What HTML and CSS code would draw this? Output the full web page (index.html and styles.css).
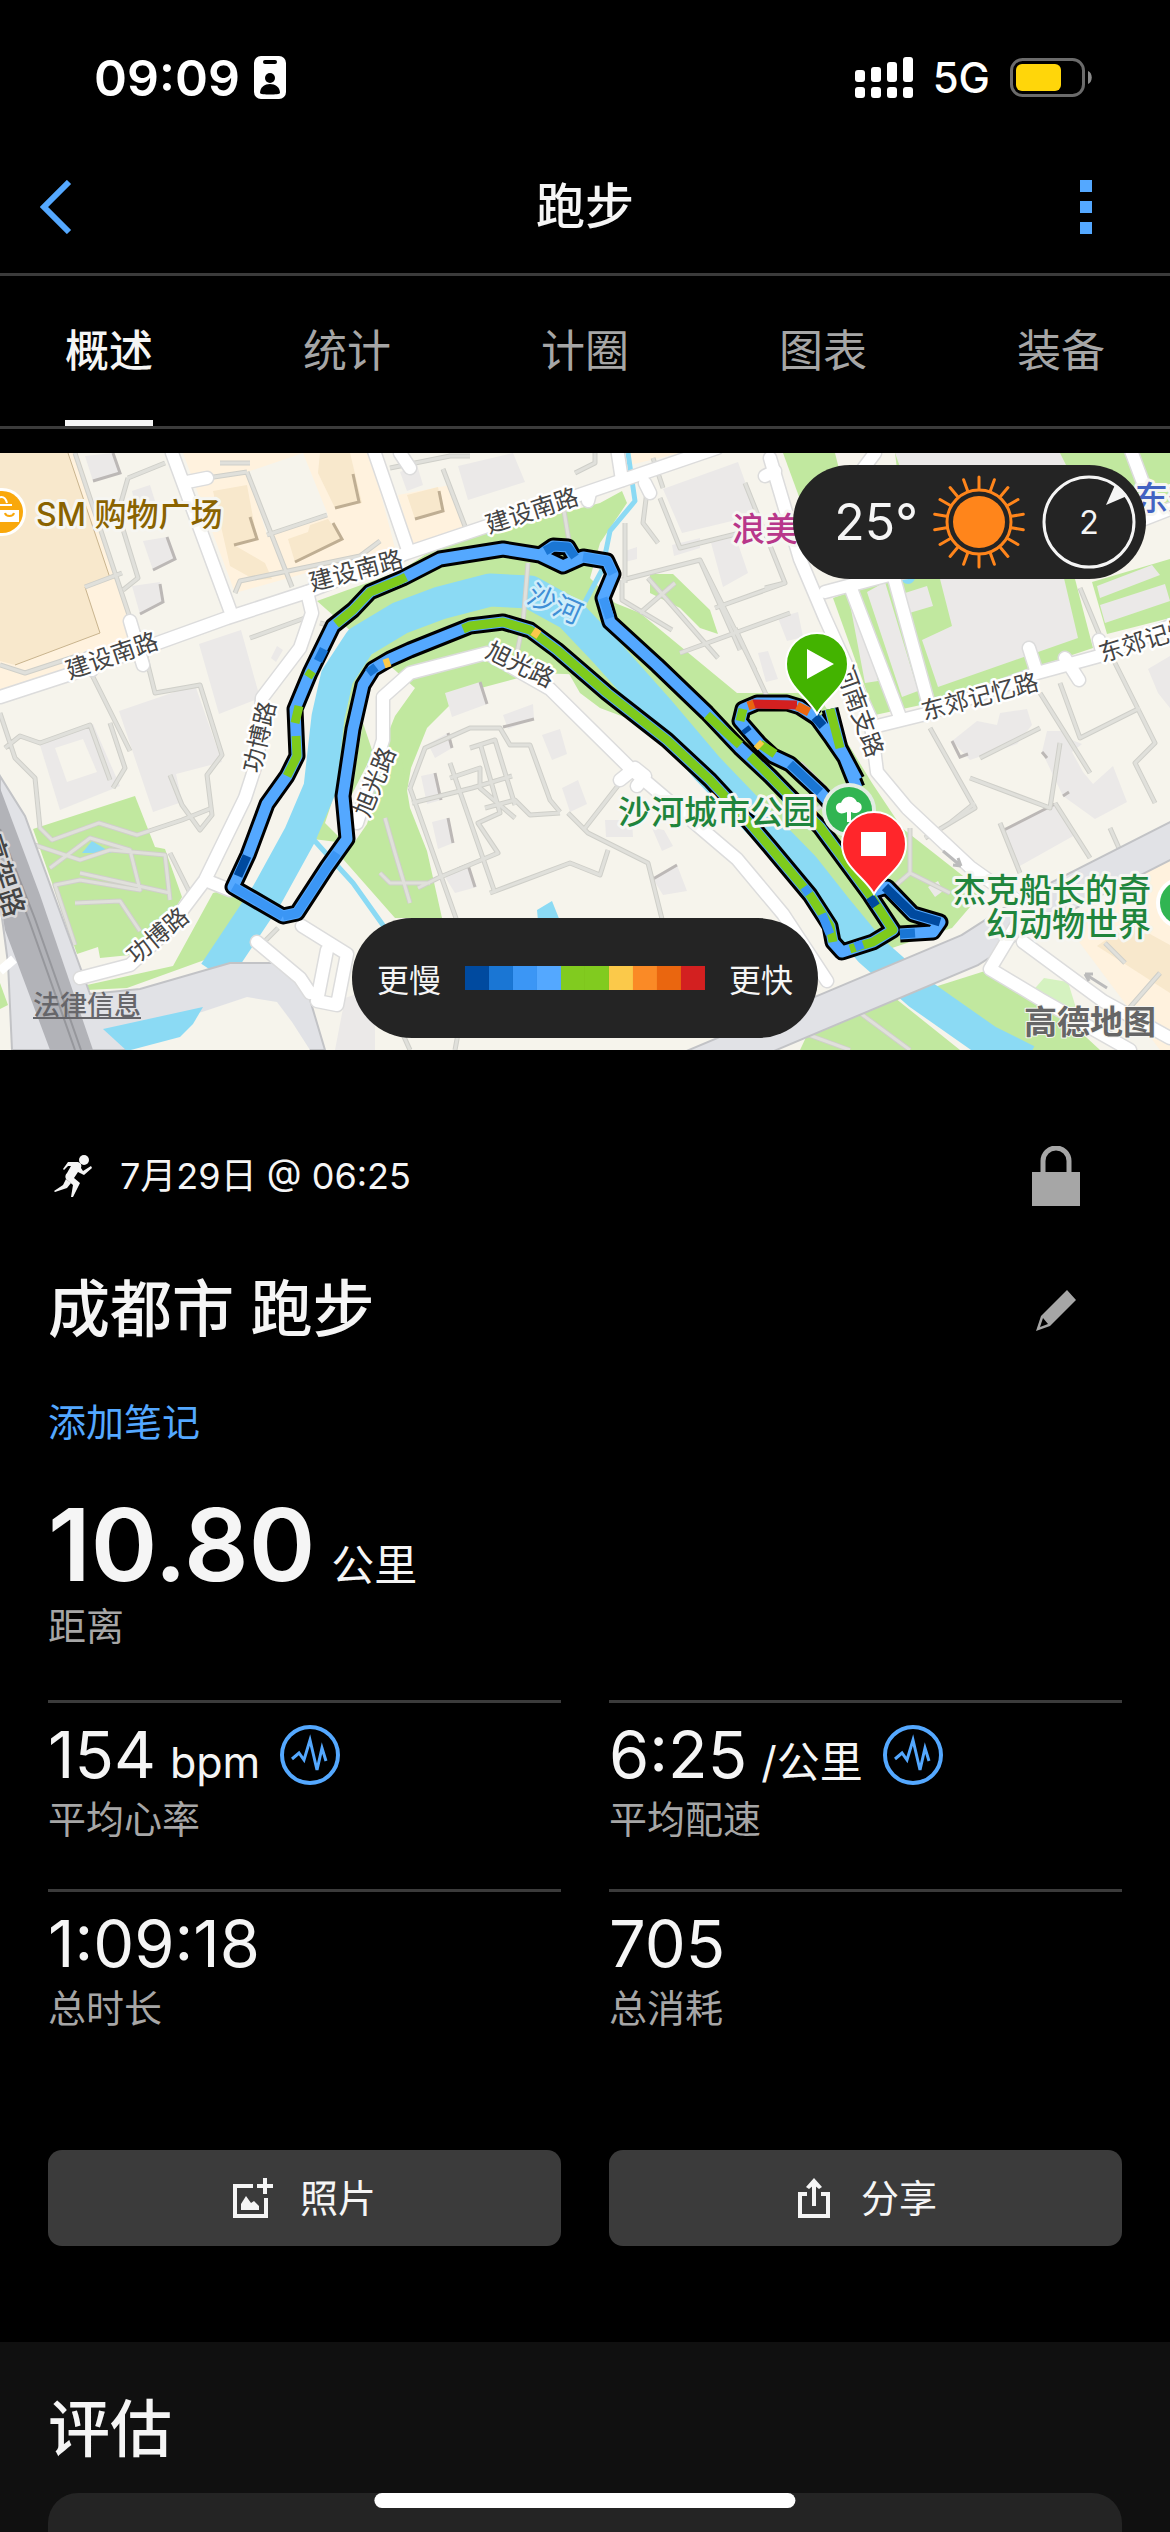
FILE: index.html
```html
<!DOCTYPE html>
<html lang="zh-CN">
<head>
    <meta charset="UTF-8">
    <meta name="viewport" content="width=device-width, initial-scale=1.0">
    <title>跑步</title>
    <link rel="stylesheet" href="styles.css">
</head>
<body>

<div class="status-bar">
    <div class="status-left">
        <span class="time">09:09</span>
        <svg width="32" height="43" viewBox="0 0 32 43">
            <rect width="32" height="43" rx="7" fill="#fff"/>
            <rect x="9" y="4" width="14" height="4" rx="2" fill="#000"/>
            <circle cx="16" cy="22" r="5" fill="#000"/>
            <path d="M6 37c0-12 20-12 20 0 0 2-20 2-20 0z" fill="#000"/>
        </svg>
    </div>
    <div class="status-right">
        <svg width="58" height="42" viewBox="0 0 58 42" fill="#fff">
            <rect x="0" y="13" width="10" height="12" rx="3"/>
            <rect x="16" y="10" width="10" height="15" rx="3"/>
            <rect x="32" y="5" width="10" height="20" rx="3"/>
            <rect x="48" y="0" width="10" height="25" rx="3"/>
            <rect x="0" y="30" width="10" height="11" rx="3"/>
            <rect x="16" y="30" width="10" height="11" rx="3"/>
            <rect x="32" y="30" width="10" height="11" rx="3"/>
            <rect x="48" y="30" width="10" height="11" rx="3"/>
        </svg>
        <span class="network">5G</span>
        <svg width="82" height="39" viewBox="0 0 82 39">
            <rect x="1.5" y="1.5" width="72" height="36" rx="11" fill="none" stroke="#6b6b6b" stroke-width="3"/>
            <rect x="6" y="6" width="45" height="27" rx="6" fill="#ffd60a"/>
            <path d="M78 13c5 2 5 11 0 13z" fill="#8a8a8a"/>
        </svg>
    </div>
</div>

<header class="header">
    <button class="icon-button back" aria-label="返回">
        <svg width="32" height="54" viewBox="0 0 32 54"><path d="M29 2L4 27l25 25" fill="none" stroke="#54a8ff" stroke-width="6"/></svg>
    </button>
    <h1>跑步</h1>
    <button class="icon-button" aria-label="更多">
        <svg width="12" height="54" viewBox="0 0 12 54" fill="#54a8ff"><path d="M0 0h12v12H0zM0 21h12v12H0zM0 42h12v12H0z"/></svg>
    </button>
</header>

<nav class="tabs">
    <a class="tab active" href="#overview">概述</a>
    <a class="tab" href="#stats">统计</a>
    <a class="tab" href="#laps">计圈</a>
    <a class="tab" href="#charts">图表</a>
    <a class="tab" href="#gear">装备</a>
</nav>

<div class="map">
    <svg class="map-canvas" viewBox="0 0 1170 597">
        <defs>
            <g id="streets">
                <path d="M0 244l80-26 147-53 80-26 100-39 143-48 73-25 94-32"/>
                <path d="M172 0l58 157M187 29l20-4M373-5l34 99M410 15l-10-15M130 168l13 44M88 205l4 12M617-5l5 32M645 30l5 10M588 48l2-8"/>
                <path d="M307 139l5 21-12 35-38 50-4 60-13 40-40 82-40 53-35 32-50 13M205 427l25 10"/>
                <path d="M383 287v-43l27-24 77-20 63 36 80 79 107 91 46 55 44 67M383 287l-26 83M620 327l15-12 10 8-8 10"/>
                <path d="M770 5l30 101 25 59 45 99 7 55 30 36 63 59 45 32 8 15-33 55 50 30 90 51M1023 489l80 59 67 37"/>
                <path d="M873 274l57-14 107-40 66-18 67-29M1037 220l-8-25M1103 202l-4-15M1065 205l14 22"/>
                <path d="M825 139l68-18 200-35 77-30M850 133l50 131M893 121l37 135M1130-5l15 40M860 20l15-20M775 18l-10 5"/>
                <path d="M257 489l43 36 10 15M302 473l45 28-10 51-20-4 10-51"/>
            </g>
            <g id="footpaths">
                <path d="M75 0l55 165M128 25l37-15M128 25l-10 35 20 65-15 12M85 134l37-14M0 212l25 8 55-18M90 218l40 80M145 200l10 40 45-8 22 70-15 20 5 40-12 15-18-25-12-30M140 190l-3 20M247 19l45 115M207 25l40-6M267 82l60-20M235 140l5-12 120-25 20-15"/>
                <path d="M5 295l15-12 20 7 50-18 20 55M0 260l15 45 20 20 5 50 12 12 47-17 38 12 45-15 30-12M35 392l45 15 30-10 55 5 5 45M50 415l40-30 40 12 10 40-60-10-25 5 20 60M80 420l90 20M75 450l45-2 20 30M110 270l15 45-12 20"/>
                <path d="M250 185l55-20M220 10h30M320 170l20 5M443 16l25 65M390 15l60-12 20 0M575 20l20-10 0-25M563 52l8 48M528 110l-5 60-6 30M648 30l-5 40 15 20M660 45l20 50 60-15M653 5l10 30"/>
                <path d="M622 127l78-20 55 110M700 107l40 90M622 127v20l50 30M648 125l70 80M640 160l35-30M715 155l70-25M680 200l110-40M735 175l35 75M745 30l40 100-20 5M625 70v60"/>
                <path d="M410 335l15-40 45-20 30 0 10 17 20 0 20 55 10 12M470 295l25-8 20 65M480 290l20 70-22 10 20 30-60 25-20 10M410 335l60 170M450 310l45 130M450 325l30-10 0 20 35 30M412 350l60-15 40-12M430 430l-40 0-10-10M560 360l-30 2-15-15-30 8M568 360l20 20 60 30 15 60M585 375l35-45M490 440l80-30 30 12 8-25"/>
                <path d="M385 365l10 35 15 50M170 400l20 40M278 475l-20 20M930 275l45 80-50 30M975 350l-25 20M1000 370l20 50M1040 240l50 80M1060 230l20 55 60-30M1080 135l25 60M1110 200l45 90-20 20 20 40M1060 290l-10 65-80-30M980 305l60-30M1055 350l35 55M1110 375l20 45M910 375l0 45-35 30M910 420l40 20M860 330l-50 30M800 310l40 40"/>
                <path d="M230 597l10-40M400 575l10 22M460 570l-5 27M860 540l0 20 50 37M1105 490l20 20M1160 520l-35 40M790 575l60 22"/>
            </g>
            <g id="track-line">
                <path d="M233 434l15-32 19-51 20-28 10-20-2-47 15-36 23-47 20-16 17-18 33-14 37-19 63-10 37 6 23 11 20-9 24 4 6 13-10 24 7 24 47 43 50 48 33 35 30 28 50 51 50 68 23 35-20 12-31 10-9-10-3-16-20-31-40-48-23-27-37-40-43-40-60-47-50-43-27-20-27-8-33 4-30 12-30 12-20 9-17 10-10 16-10 44-10 67 4 43-20 28-30 46-14 3z"/>
                <path d="M540 102l13-9 15 1 7 12"/>
                <path d="M817 265l-17-11-13-4h-30l-14 6-3 12 20 23 13 12 17 8 30 28 40 45M874 438l13-4 26 27 27 8-7 10-33 2"/>
                <path d="M817 265l13 18 15 22 12 30M830 256l10 39 17 32"/>
            </g>
        </defs>

        <rect width="1170" height="597" fill="#f6f4ec"/>

        <!-- shopping and residential blocks -->
        <g fill="#fff2de">
            <path d="M0 0h78l50 160 12 30L0 240z"/>
            <path d="M183 0h187l25 95-160 45z"/>
            <path d="M398 42l52-10 15 42-52 20z"/>
            <path d="M628 0h52l-50 12z"/>
            <path d="M1065 470l105-65v192h-10z"/>
        </g>
        <path d="M247 19l56-19 25 62-61 20z" fill="#f6f4ec"/>
        <g fill="#f8e8cc">
            <path d="M0 0h68l42 125-25 9 15 46-85 32-15-4z"/>
            <path d="M213 38l34-6 10 54-23 6 31 18 7 16-17 1-25-14z"/>
            <path d="M320 0h30l12 50-27 5-17-35z"/>
            <path d="M288 86l20-7 2-7 18-6 14 20-47 23z"/>
            <path d="M407 42l31-8 5 24-28 8z"/>
            <path d="M1097 493l33-23 40 22v48z"/>
        </g>
        <path d="M234 92l23-6-7-22M295 109l47-23-9-16M335 55l24-6-6-28M415 66l28-8-4-20" fill="none" stroke="#bfae93" stroke-width="3"/>
        <path d="M68 0l42 125-25 9 15 46-85 32" fill="none" stroke="#c9b48e" stroke-width="1"/>

        <!-- parks -->
        <g fill="#c1e89f">
            <path d="M33 376l102-33 20 51 10 2 17 48-32 56-50 5-2-11-21 7z"/>
            <path d="M0 530l8 22-8 4z"/>
            <path d="M87 532l86-19 40-73 12-3 35 18-50 50-83 30-40 2z"/>
            <path d="M317 148l83-30 40-26 160-42 22-12 5 12-27 40-10 35 25 25 25 10 97 80h80l55 90 30 45 70 55 10 10-30 35-60 20-30-23-160-160-60-50-50-40-55-2-75 20-35 35-16 40-10 58-31-5 5-55 20-50 20-28z"/>
            <path d="M313 386l20-40 5-100 20-35 52-38 80-8 45 25 25 15 20 35 20 15 40 15 80 50 40 40 80 110-20-40-150-150-80-70-80-40-75 10-50 20-25 40-15 70-20 60 20 20z"/>
            <path d="M343 406l24-35 26-88 5 1 12 71 17 43 15 67h-47z"/>
            <path d="M363 270l10 30-23 45z"/>
            <path d="M650 121h23l37 36 8 24-18-6-20-20-30-15z"/>
            <path d="M783 0h52l15 60h-45z"/>
            <path d="M833 145l54-19 43 124-55 12z"/>
            <path d="M898 126h177l18 69-158 53z"/>
            <path d="M1092 129l78-23v59l-63 16z"/>
            <path d="M895 0h275v50l-265 30z"/>
            <path d="M815 565l75-24 70 56H800z"/>
            <path d="M925 537l60-19 75 42 40 37h-90z"/>
        </g>
        <path d="M1030 541l14-16 24 4 8 26-14 10z" fill="#d5f2c0"/>

        <!-- buildings -->
        <g fill="#ebe9e8">
            <path d="M85 3l28-3 7 20-27 8zM143 88l24-4 8 22-22 11zM132 133l28-4 3 20-23 12zM132 38l18-6 5 16-20 4z"/>
            <path d="M119 258l76-26 27 77-46 12 6 28-29 10zM199 191l42-14 19 68-41 16zM271 205l6-12 6 4-7 12z"/>
            <path d="M39 289l54-18 27 62-60 24zM55 295l12 34 30-10-14-33z" fill-rule="evenodd"/>
            <path d="M458 13l55-13 12 29-57 18zM400 19l17-7 6 20-16 6zM663 36l75-27 19 53-75 18zM710 86l25-4 13 38-25 14zM672 92l28-7v10l-26 8zM625 98l12-4v12l-12 3z"/>
            <path d="M445 240l35-11 7 22-35 13zM503 262l30-11 1 15-26 10zM542 282l18-6 7 25-15 6zM562 335l16-8 9 24-17 8z"/>
            <path d="M421 323l14-3 6 27-14 4zM432 369l16-4 5 25-15 6zM445 424l23-12 9 22-22 6zM653 426l24-14 10 26-24 4zM428 291l20-11 4 15-17 10z"/>
            <path d="M605 367h27l1 17h-27zM652 375l12 2 9 16-11 5zM758 200l10-2 10 28-12 3zM778 165l20-6 5 25-16 4z"/>
            <path d="M940 126l123-5 15 64-140 49-16-47 30-14zM867 139l18-10 33 109-16 6zM850 151l10-4 18 81-13 2zM905 140l22-7 6 20-27 8z"/>
            <path d="M895 0h165l20 40-160 30zM1097 133l55-21 8 10-60 23zM1100 152l65-21 5 17-65 22z"/>
            <path d="M952 288l25-20 20 4 3-12 27-4 5 16-15 19-47 16zM1042 299l5-21h16l9 9 10 4-10 8 11 20 10 12 20-18 14 36-32 17-32-23z"/>
            <path d="M1002 378l53-27 20 31-57 32zM1148 216l22-13v52l-12-15zM928 434l10-6 5 10-8 6zM345 545l30-10v62h-40z"/>
        </g>
        <path d="M93 28l27-8-7-20M153 117l22-11-8-22M140 161l23-12-3-18M487 251l-7-22M503 274l31-8M475 434l-7-22-10 4M441 347l-6-27M453 390l-5-25M653 426l24-14M452 295l-4-15M1002 378l53-27M952 288l8 16 8-3M1042 299l5 6M1063 343l6-4" fill="none" stroke="#bcb8b6" stroke-width="3"/>

        <!-- water -->
        <g fill="none" stroke="#8bdaf4" stroke-linejoin="round">
            <path d="M215 520l52-78 33-60 20-47 8-71 9-40 23-35 40-24 40-15 50-13 40 2 40 22 37 39 50 56 50 59 50 52 46 47 34 43 33 40 50 44 67 47 40 20" stroke-width="33"/>
            <path d="M628 0l7 48-25 30-8 39-17 32" stroke-width="5"/>
            <path d="M313 386l40 44 32 45" stroke-width="5"/>
        </g>
        <g fill="#8bdaf4">
            <path d="M82 400l10-12 20 12zM537 457l15-9 8 20h-22z"/>
            <circle cx="908" cy="124" r="7"/>
        </g>

        <use href="#footpaths" class="footpath-casing"/>
        <use href="#footpaths" class="footpath"/>

        <!-- expressways -->
        <path d="M0 323l25 40 65 178 50-5 90-26h45l30 20 20 67H12L8 510l-8-60z" fill="#e1e2e6" stroke="#c2c3c6" stroke-width="2"/>
        <path d="M127 578l75-19 45-15 30 5 15 20 18 28H130z" fill="#f6f4ec"/>
        <path d="M103 576l100-22-10 17-13 13-53 14z" fill="#8bdaf4"/>
        <path d="M690 615l147-62 133-56 53-34 157-80" fill="none" stroke="#c2c3c6" stroke-width="36"/>
        <path d="M690 615l147-62 133-56 53-34 157-80" fill="none" stroke="#e1e2e6" stroke-width="32"/>
        <path d="M0 335l40 107 53 155H50L5 477l-5-30z" fill="#b2b3b8"/>
        <path d="M0 390l30 80 45 127M0 376l35 90 46 131" fill="none" stroke="#96979c" stroke-width="2"/>
        <path d="M0 518l14-12" stroke="#fff" stroke-width="9"/>

        <!-- streets: casing first, then the white surface -->
        <use href="#streets" class="street-casing"/>
        <use href="#streets" class="street"/>
        <path d="M943 398l18 15M961 413l-8-1M961 413l-3-8M1107 535l-22-14M1085 521l8 0M1085 521l4 7" fill="none" stroke="#bbb" stroke-width="3"/>

        <!-- street names -->
        <g class="street-name">
            <text transform="translate(112 203) rotate(-19)" y="8">建设南路</text>
            <text transform="translate(356 118) rotate(-15)" y="8">建设南路</text>
            <text transform="translate(532 58) rotate(-18)" y="8">建设南路</text>
            <text transform="translate(260 284) rotate(-77)" y="8">功博路</text>
            <text transform="translate(158 483) rotate(-40)" y="8">功博路</text>
            <text transform="translate(375 329) rotate(-68)" y="8">旭光路</text>
            <text transform="translate(520 212) rotate(26)" y="8">旭光路</text>
            <text transform="translate(980 244) rotate(-15)" y="8">东郊记忆路</text>
            <text transform="translate(1157 184) rotate(-17)" y="8">东郊记忆路</text>
            <text transform="translate(859 258) rotate(70)" y="8">河南支路</text>
            <text class="highway-name" transform="translate(2 423) rotate(72)" y="9">高架路</text>
            <text class="river-name" transform="translate(555 151) rotate(24)" y="10">沙河</text>
        </g>

        <!-- recorded track -->
        <g class="track">
            <use href="#track-line" class="track-outline"/>
            <use href="#track-line" class="track-pace"/>
            <g stroke="#7ecb1c">
                <path d="M287 323l10-20-1-20M295 270l4-17M308 224l4-6M336 171l17-14 17-18 30-12 6-3M463 176l7-3 33-4 27 8 27 20 50 43 60 47 43 40 37 40 23 27 40 48 20 31 3 16M850 496l23-7 20-12-23-35-50-68-50-51-20-20M740 292l-33-30M760 291l15 10M743 256l-3 12M830 256l10 39"/>
            </g>
            <g stroke="#1a76d4">
                <path d="M318 208l6-12M545 98l9-5 14 1 7 10M368 220l8-6M790 311l30 28M915 480l-15 1"/>
            </g>
            <g stroke="#3b96f5">
                <path d="M283 463l-50-29M283 463l14-3 30-46 10-14M613 121l-6-13-24-4M603 145l7 20M822 461l8 20M804 434l5 7M855 494l8-3"/>
            </g>
            <g stroke="#004a9f">
                <path d="M238 423l9-20M745 275l3 4M815 264l8 9M885 434l28 27 27 8M870 444l6 9"/>
            </g>
            <path d="M533 178l6 4M384 211l6-2M757 290l4 4" stroke="#fbc94a"/>
            <path d="M752 251l45 1" stroke="#d32020"/>
            <path d="M748 253l6-2M797 253l12 6" stroke="#ea660f"/>
        </g>

        <!-- places -->
        <g class="place">
            <circle cx="2" cy="59" r="24" fill="#fff"/>
            <circle cx="2" cy="59" r="21" fill="#f9a80c"/>
            <path d="M0 57h19v12H0z" fill="#fff"/>
            <path d="M-6 52h18M-4 50c2-8 9-8 11 0" fill="none" stroke="#fff" stroke-width="2"/>
            <path d="M5 60c1 4 8 4 9 0" fill="none" stroke="#f9a80c" stroke-width="2"/>
            <text class="mall" x="36" y="73">SM 购物广场</text>
            <text class="shop" x="732" y="88">浪美</text>
            <text class="school" x="1135" y="57">东郊</text>
            <circle cx="849" cy="357" r="27" fill="#e3ece3"/>
            <circle cx="849" cy="357" r="23" fill="#31b552"/>
            <path d="M837 358c-3-5 1-9 4-8 3-8 13-8 16-1 5 0 6 7 3 9-3 3-7 2-9 1v10h-4v-10c-4 2-8 2-10-1z" fill="#fff"/>
            <text class="park" x="618" y="371">沙河城市公园</text>
            <circle cx="1182" cy="450" r="26" fill="#fff"/>
            <circle cx="1182" cy="450" r="22" fill="#31b552"/>
            <text class="park end" x="1151" y="449">杰克船长的奇</text>
            <text class="park end" x="1151" y="483">幻动物世界</text>
            <text class="provider end" x="1156" y="581">高德地图</text>
        </g>

        <!-- start and finish pins -->
        <g stroke="#fff" stroke-width="2">
            <path d="M817 261c-9-17-31-27-31-50a31 31 0 0 1 62 0c0 23-22 33-31 50z" fill="#43b300"/>
            <path d="M874 441c-9-17-32-27-32-50a32 32 0 0 1 64 0c0 23-23 33-32 50z" fill="#ff262b"/>
        </g>
        <path d="M807 196l27 15-27 15zM861 379h25v24h-25z" fill="#fff"/>
    </svg>

    <a class="legal" href="#legal">法律信息</a>

    <div class="weather">
        <span class="temperature">25°</span>
        <svg width="94" height="94" viewBox="-47 -47 94 94">
            <circle r="26" fill="#ff851b"/>
            <circle r="32" fill="none" stroke="#ff851b" stroke-width="3"/>
            <g stroke="#ff851b" stroke-width="3" stroke-linecap="round">
                <path id="ray-pair" d="M0-33v-12M0 33v12"/>
                <use href="#ray-pair" transform="rotate(20)"/>
                <use href="#ray-pair" transform="rotate(40)"/>
                <use href="#ray-pair" transform="rotate(60)"/>
                <use href="#ray-pair" transform="rotate(80)"/>
                <use href="#ray-pair" transform="rotate(100)"/>
                <use href="#ray-pair" transform="rotate(120)"/>
                <use href="#ray-pair" transform="rotate(140)"/>
                <use href="#ray-pair" transform="rotate(160)"/>
            </g>
        </svg>
        <div class="wind">
            <svg width="94" height="94" viewBox="-47 -47 94 94">
                <circle r="45" fill="none" stroke="#f5f5f5" stroke-width="3"/>
                <path d="M17-17l9-20q8 5 12 11z" fill="#f5f5f5"/>
            </svg>
            <span>2</span>
        </div>
    </div>

    <div class="legend">
        <span>更慢</span>
        <div class="scale">
            <i class="c1"></i><i class="c2"></i><i class="c3"></i><i class="c4"></i><i class="c5"></i><i class="c5"></i><i class="c6"></i><i class="c7"></i><i class="c8"></i><i class="c9"></i>
        </div>
        <span>更快</span>
    </div>
</div>

<main class="content">
    <div class="row">
        <div class="meta">
            <svg width="40" height="42" viewBox="0 0 40 42" fill="#f5f5f5">
                <circle cx="30" cy="5" r="5"/>
                <path d="M9 14l5-7 10 0c3 1 4 3 3 6l2 3 8-5 1 2-8 7-6-3-4 6 6 5-7 14h-2l2-12-7-6c-1-2-1-4 1-6l4-7h-3l-4 4z"/>
                <path d="M12 24l5 4-4 5-12 4-1-1 9-6z"/>
            </svg>
            <span>7月29日 @ 06:25</span>
        </div>
        <button class="side-button" aria-label="隐私">
            <svg width="48" height="60" viewBox="0 0 48 60"><path d="M0 26h48v34H0z" fill="#a6a6a6"/><path d="M11 28V15a13 13 0 0 1 26 0v13" fill="none" stroke="#a6a6a6" stroke-width="5"/></svg>
        </button>
    </div>

    <div class="row title-row">
        <h2>成都市 跑步</h2>
        <button class="side-button" aria-label="编辑">
            <svg width="40" height="41" viewBox="0 0 40 41"><path d="M31 0l9 10-26 26-14 5 5-15zM7 28l-3 9 8-3z" fill="#a6a6a6" fill-rule="evenodd"/></svg>
        </button>
    </div>

    <a class="add-note" href="#note">添加笔记</a>

    <div class="distance">
        <span class="big">10.80</span>
        <span class="unit">公里</span>
    </div>
    <div class="label">距离</div>

    <div class="stats">
        <div class="stat">
            <div class="value">
                154 <span class="unit">bpm</span>
                <button class="chart-button" aria-label="心率图表">
                    <svg width="60" height="60" viewBox="0 0 60 60" fill="none" stroke="#54a8ff"><circle cx="30" cy="30" r="28" stroke-width="4"/><path d="M12 34l7-6 5 7 6-20 7 30 5-22 4 13" stroke-width="3"/></svg>
                </button>
            </div>
            <div class="label">平均心率</div>
        </div>
        <div class="stat">
            <div class="value">
                6:25 <span class="unit">/公里</span>
                <button class="chart-button" aria-label="配速图表">
                    <svg width="60" height="60" viewBox="0 0 60 60" fill="none" stroke="#54a8ff"><circle cx="30" cy="30" r="28" stroke-width="4"/><path d="M12 34l7-6 5 7 6-20 7 30 5-22 4 13" stroke-width="3"/></svg>
                </button>
            </div>
            <div class="label">平均配速</div>
        </div>
        <div class="stat">
            <div class="value">1:09:18</div>
            <div class="label">总时长</div>
        </div>
        <div class="stat">
            <div class="value">705</div>
            <div class="label">总消耗</div>
        </div>
    </div>

    <div class="actions">
        <button class="action">
            <svg width="40" height="40" viewBox="0 0 40 40">
                <path d="M20 8H2v30h31V20" fill="none" stroke="#f5f5f5" stroke-width="4"/>
                <path d="M24 8h16M32 0v16" stroke="#f5f5f5" stroke-width="4"/>
                <path d="M8 32v-6l5-8 5 7 3-2 5 5v4z" fill="#f5f5f5"/>
            </svg>
            照片
        </button>
        <button class="action">
            <svg width="40" height="40" viewBox="0 0 40 40">
                <path d="M13 16H6v22h28V16h-7" fill="none" stroke="#f5f5f5" stroke-width="4"/>
                <path d="M20 28V6" stroke="#f5f5f5" stroke-width="4"/>
                <path d="M20 0l8 9-3 2-5-4-5 4-3-2z" fill="#f5f5f5"/>
            </svg>
            分享
        </button>
    </div>
</main>

<section class="evaluation">
    <h2>评估</h2>
    <div class="card"></div>
</section>

<div class="home-indicator"></div>

</body>
</html>
```
FILE: styles.css
```css
* {
    box-sizing: border-box;
}
body {
    margin: 0;
    min-height: 100vh;
    display: flex;
    flex-direction: column;
    background: #000;
    color: #f5f5f5;
    font-family: Inter, "Noto Sans CJK SC", sans-serif;
}
h1, h2 {
    margin: 0;
    font-weight: 500;
}
button {
    padding: 0;
    border: none;
    background: none;
    color: inherit;
    font-family: inherit;
    cursor: pointer;
}
a {
    color: inherit;
    text-decoration: none;
}
svg {
    display: block;
}

/* status bar */
.status-bar {
    display: flex;
    justify-content: space-between;
    align-items: center;
    height: 141px;
    padding: 14px 78px 0 94px;
    color: #fff;
}
.status-left {
    display: flex;
    align-items: center;
    gap: 14px;
}
.status-right {
    display: flex;
    align-items: center;
    gap: 20px;
}
.time {
    font-size: 50px;
    font-weight: 600;
}
.network {
    font-size: 42px;
    font-weight: 500;
}

/* header */
.header {
    display: flex;
    justify-content: space-between;
    align-items: center;
    height: 135px;
    padding: 0 24px;
    border-bottom: 3px solid #3b3b3b;
}
.header h1 {
    font-size: 49px;
    line-height: 72px;
}
.icon-button {
    display: flex;
    justify-content: center;
    align-items: center;
    width: 120px;
    height: 100px;
}
.icon-button.back {
    justify-content: flex-start;
    padding-left: 16px;
}

/* tabs */
.tabs {
    display: flex;
    justify-content: space-between;
    padding: 0 65px;
    border-bottom: 3px solid #3b3b3b;
    margin-bottom: 24px;
}
.tab {
    height: 150px;
    font-size: 44px;
    line-height: 150px;
    color: #a6a6a6;
}
.tab.active {
    color: #f5f5f5;
    font-weight: 500;
    border-bottom: 6px solid #f5f5f5;
}

/* map */
.map {
    position: relative;
    overflow: hidden;
}
.map-canvas {
    width: 100%;
    height: auto;
}
.footpath,
.footpath-casing {
    fill: none;
    stroke: #e0e0db;
    stroke-width: 3;
    stroke-linejoin: round;
}
.footpath-casing {
    stroke: #cfcfc9;
    stroke-width: 5;
}
.street,
.street-casing {
    fill: none;
    stroke: #fff;
    stroke-width: 12;
    stroke-linejoin: round;
    stroke-linecap: round;
}
.street-casing {
    stroke: #dcdcdc;
    stroke-width: 15;
}
.street-name text {
    font-size: 24px;
    fill: #444;
    stroke: #fff;
    stroke-width: 5;
    stroke-linejoin: round;
    paint-order: stroke;
    text-anchor: middle;
}
.street-name .highway-name {
    font-size: 28px;
    font-weight: 500;
    stroke: #d8d8da;
}
.street-name .river-name {
    font-size: 28px;
    fill: #3f8fd6;
    stroke: #cfeefa;
}
.track {
    fill: none;
    stroke-width: 9;
    stroke-linejoin: round;
}
.track-outline {
    stroke: #000;
    stroke-width: 17;
}
.track-pace {
    stroke: #54a8ff;
    stroke-width: 11;
}
.place text {
    font-size: 33px;
    font-weight: 500;
    stroke: #f6f6f2;
    stroke-width: 6;
    stroke-linejoin: round;
    paint-order: stroke;
}
.place .mall {
    font-size: 32px;
    fill: #8a6300;
}
.place .shop {
    fill: #b8378a;
}
.place .school {
    fill: #4263c2;
}
.place .park {
    fill: #1f853c;
}
.place .provider {
    fill: #666;
    font-weight: 700;
    stroke-width: 2;
}
.place .end {
    text-anchor: end;
}
.legal {
    position: absolute;
    left: 33px;
    bottom: 28px;
    font-size: 27px;
    line-height: 32px;
    font-weight: 500;
    color: #66666a;
    text-decoration: underline;
}
.weather {
    position: absolute;
    top: 12px;
    right: 24px;
    display: flex;
    align-items: center;
    height: 114px;
    padding: 0 10px 0 41px;
    border-radius: 57px;
    background: #242424;
}
.temperature {
    margin-right: 14px;
    font-size: 50px;
}
.wind {
    display: grid;
    place-items: center;
    margin-left: 16px;
    font-size: 32px;
}
.wind > * {
    grid-area: 1 / 1;
}
.legend {
    position: absolute;
    left: 50%;
    bottom: 12px;
    transform: translateX(-50%);
    display: flex;
    align-items: center;
    gap: 24px;
    height: 120px;
    padding: 0 25px;
    border-radius: 60px;
    background: #242424;
    font-size: 32px;
    white-space: nowrap;
}
.scale {
    display: flex;
}
.scale i {
    width: 24px;
    height: 24px;
}
.c1 { background: #004a9f; }
.c2 { background: #1a76d4; }
.c3 { background: #3b96f5; }
.c4 { background: #54a8ff; }
.c5 { background: #81cb1f; }
.c6 { background: #fbc94a; }
.c7 { background: #fa8a26; }
.c8 { background: #ea660f; }
.c9 { background: #d32020; }

/* activity */
.content {
    padding: 90px 48px 96px;
}
.row {
    display: flex;
    justify-content: space-between;
    align-items: center;
    height: 72px;
}
.meta {
    display: flex;
    align-items: center;
    gap: 26px;
    padding-left: 6px;
    font-size: 36px;
    line-height: 48px;
}
.side-button {
    display: flex;
    justify-content: center;
    align-items: center;
    width: 132px;
    height: 72px;
}
.title-row {
    margin-top: 62px;
}
.title-row h2 {
    font-size: 62px;
    line-height: 72px;
}
.add-note {
    display: block;
    margin-top: 52px;
    font-size: 38px;
    line-height: 48px;
    color: #54a8ff;
}
.distance {
    display: flex;
    align-items: baseline;
    gap: 16px;
    height: 100px;
    margin-top: 48px;
    line-height: 100px;
}
.big {
    font-size: 101px;
    font-weight: 600;
}
.unit {
    font-size: 43px;
}
.label {
    margin-top: 8px;
    font-size: 38px;
    line-height: 48px;
    color: #a6a6a6;
}
.stats {
    display: grid;
    grid-template-columns: 1fr 1fr;
    column-gap: 48px;
    margin-top: 50px;
}
.stat {
    padding: 20px 0 46px;
    border-top: 3px solid #3b3b3b;
}
.value {
    display: flex;
    align-items: baseline;
    gap: 14px;
    height: 64px;
    font-size: 65px;
    line-height: 64px;
}
.chart-button {
    align-self: center;
    margin-left: 6px;
}
.actions {
    display: grid;
    grid-template-columns: 1fr 1fr;
    gap: 48px;
    margin-top: 72px;
}
.action {
    display: flex;
    justify-content: center;
    align-items: center;
    gap: 27px;
    height: 96px;
    border-radius: 14px;
    background: #3b3b3b;
    font-size: 38px;
    line-height: 48px;
}

/* evaluation */
.evaluation {
    flex: 1;
    display: flex;
    flex-direction: column;
    padding: 52px 48px 0;
    background: #101010;
}
.evaluation h2 {
    font-size: 62px;
    line-height: 72px;
}
.card {
    flex: 1;
    margin-top: 27px;
    border-radius: 30px 30px 0 0;
    background: #242424;
}
.home-indicator {
    position: fixed;
    left: 50%;
    bottom: 24px;
    transform: translateX(-50%);
    width: 36%;
    height: 15px;
    border-radius: 8px;
    background: #fff;
}
```
